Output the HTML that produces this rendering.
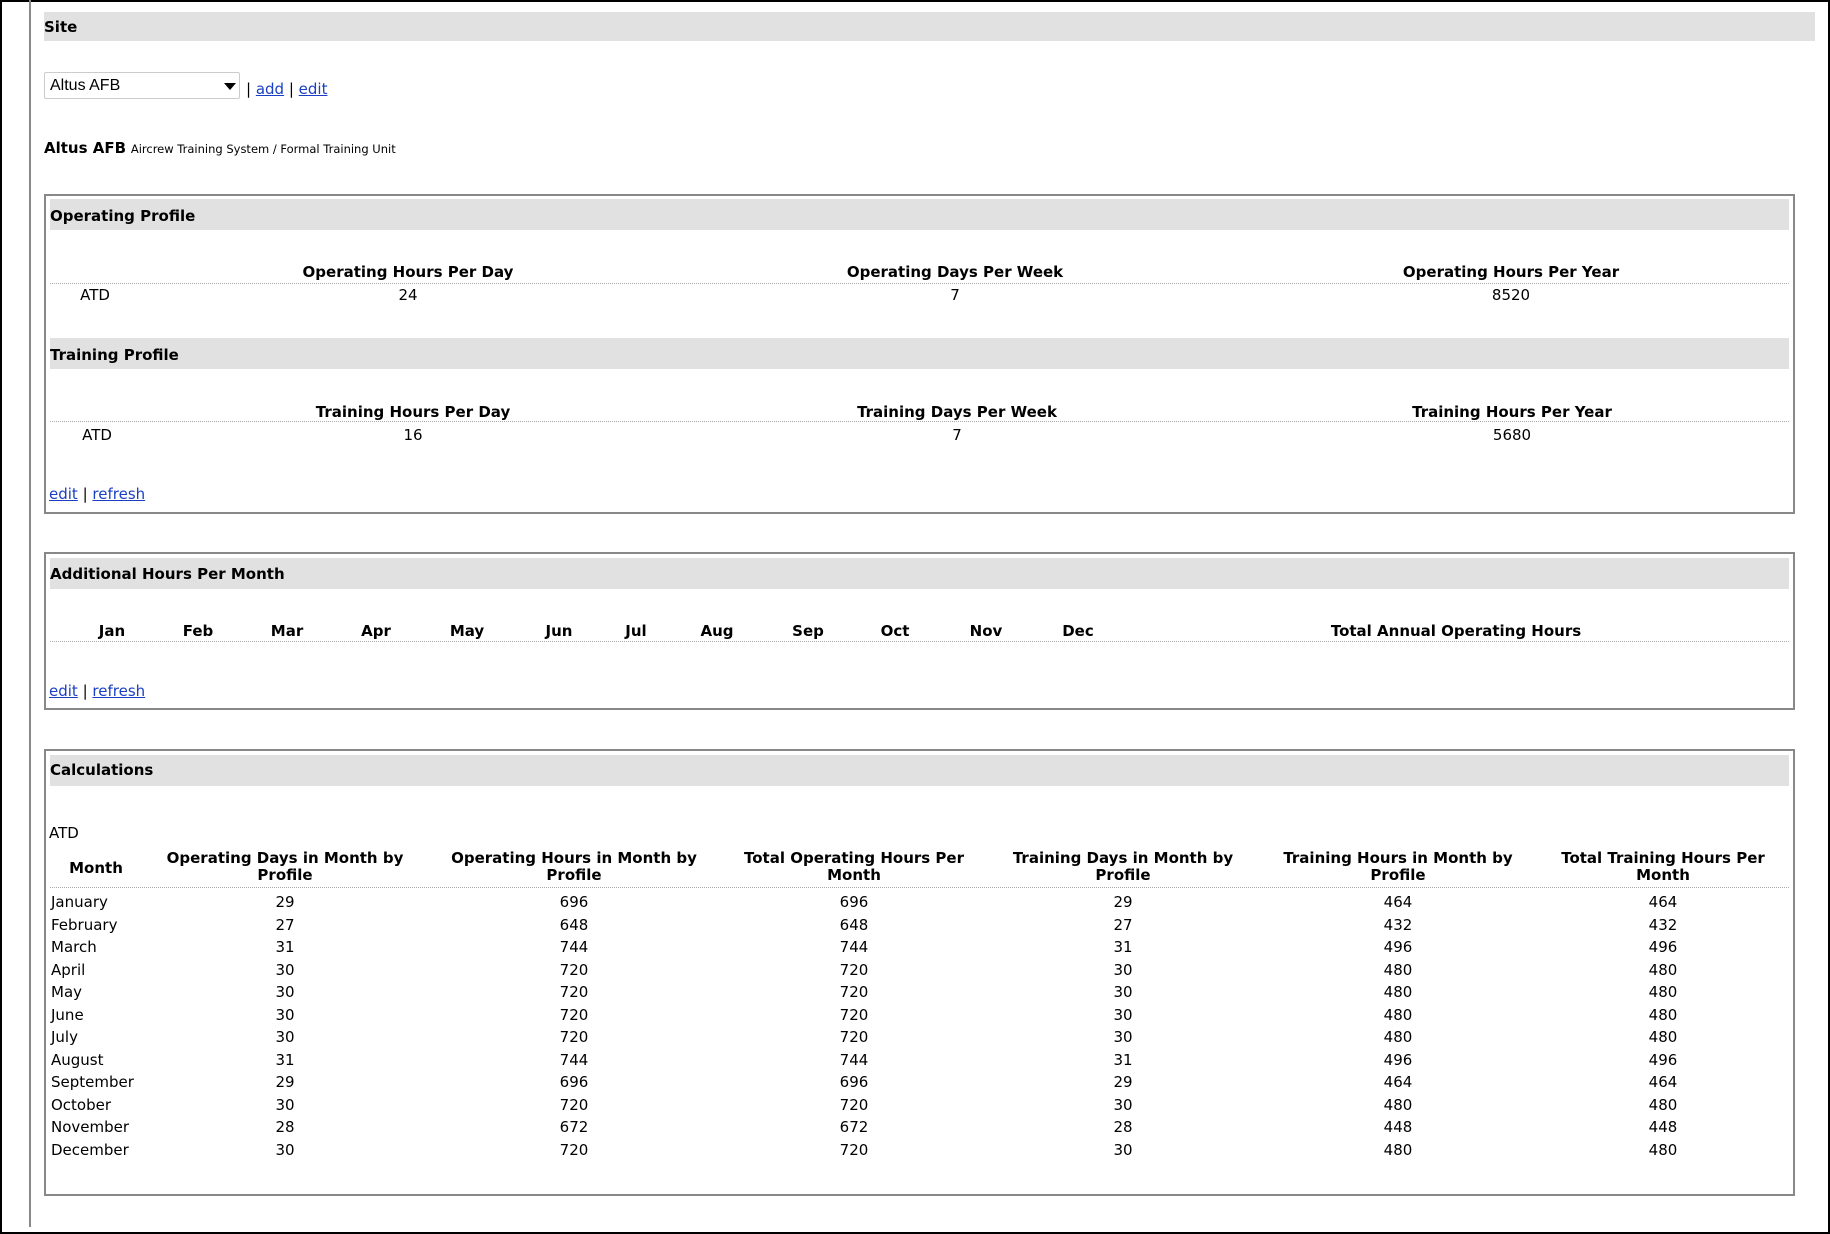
<!DOCTYPE html>
<html><head><meta charset="utf-8"><style>
*{margin:0;padding:0;box-sizing:border-box}
body{width:1830px;height:1234px;position:relative;background:#fff;font-family:"DejaVu Sans","Liberation Sans",sans-serif;font-size:15px;color:#000;overflow:hidden}
.frame{position:absolute;left:0;top:0;width:1830px;height:1234px;border:2px solid #000}
.vl{position:absolute;left:29px;top:0;width:2px;height:1227px;background:#888}
.a{position:absolute;white-space:nowrap;line-height:18px}
.c{position:absolute;white-space:nowrap;line-height:18px;transform:translateX(-50%);text-align:center}
.b{font-weight:bold}
.bar{position:absolute;background:#e1e1e1}
.box{position:absolute;border:2px solid #888}
.dot{position:absolute;height:0;border-top:1px dotted #aaa}
a{color:#1a3fc4;text-decoration:underline}
</style></head><body>
<div class="frame"></div>
<div class="vl"></div>

<div class="bar" style="left:44px;top:12px;width:1771px;height:29px"></div>
<div class="a b" style="left:44px;top:18px">Site</div>

<div style="position:absolute;left:44px;top:72px;width:196px;height:27px;border:1px solid #ccc;border-radius:2px;background:#fff"></div>
<div class="a" style="left:50px;top:77px;font-family:'Liberation Sans',sans-serif;font-size:16px">Altus AFB</div>
<div style="position:absolute;left:224px;top:83px;width:0;height:0;border-left:6px solid transparent;border-right:6px solid transparent;border-top:7px solid #000"></div>
<div class="a" style="left:246px;top:80px">| <a>add</a> | <a>edit</a></div>

<div class="a" style="left:44px;top:139px"><b>Altus AFB</b> <span style="font-size:11.5px">Aircrew Training System / Formal Training Unit</span></div>

<!-- Operating profile box -->
<div class="box" style="left:44px;top:194px;width:1751px;height:320px"></div>
<div class="bar" style="left:50px;top:199px;width:1739px;height:31px"></div>
<div class="a b" style="left:50px;top:207px">Operating Profile</div>
<div class="c b" style="left:408px;top:263px">Operating Hours Per Day</div>
<div class="c b" style="left:955px;top:263px">Operating Days Per Week</div>
<div class="c b" style="left:1511px;top:263px">Operating Hours Per Year</div>
<div class="dot" style="left:50px;top:283px;width:1739px"></div>
<div class="c" style="left:95px;top:286px">ATD</div>
<div class="c" style="left:408px;top:286px">24</div>
<div class="c" style="left:955px;top:286px">7</div>
<div class="c" style="left:1511px;top:286px">8520</div>

<div class="bar" style="left:50px;top:338px;width:1739px;height:31px"></div>
<div class="a b" style="left:50px;top:346px">Training Profile</div>
<div class="c b" style="left:413px;top:403px">Training Hours Per Day</div>
<div class="c b" style="left:957px;top:403px">Training Days Per Week</div>
<div class="c b" style="left:1512px;top:403px">Training Hours Per Year</div>
<div class="dot" style="left:50px;top:421px;width:1739px"></div>
<div class="c" style="left:97px;top:426px">ATD</div>
<div class="c" style="left:413px;top:426px">16</div>
<div class="c" style="left:957px;top:426px">7</div>
<div class="c" style="left:1512px;top:426px">5680</div>
<div class="a" style="left:49px;top:485px"><a>edit</a> | <a>refresh</a></div>

<!-- Additional hours -->
<div class="box" style="left:44px;top:552px;width:1751px;height:158px"></div>
<div class="bar" style="left:50px;top:558px;width:1739px;height:31px"></div>
<div class="a b" style="left:50px;top:565px">Additional Hours Per Month</div>
<div class="c b" style="left:112px;top:622px">Jan</div>
<div class="c b" style="left:198px;top:622px">Feb</div>
<div class="c b" style="left:287px;top:622px">Mar</div>
<div class="c b" style="left:376px;top:622px">Apr</div>
<div class="c b" style="left:467px;top:622px">May</div>
<div class="c b" style="left:559px;top:622px">Jun</div>
<div class="c b" style="left:636px;top:622px">Jul</div>
<div class="c b" style="left:717px;top:622px">Aug</div>
<div class="c b" style="left:808px;top:622px">Sep</div>
<div class="c b" style="left:895px;top:622px">Oct</div>
<div class="c b" style="left:986px;top:622px">Nov</div>
<div class="c b" style="left:1078px;top:622px">Dec</div>
<div class="c b" style="left:1456px;top:622px">Total Annual Operating Hours</div>
<div class="dot" style="left:50px;top:641px;width:1739px"></div>
<div class="a" style="left:49px;top:682px"><a>edit</a> | <a>refresh</a></div>

<!-- Calculations -->
<div class="box" style="left:44px;top:749px;width:1751px;height:447px"></div>
<div class="bar" style="left:50px;top:755px;width:1739px;height:31px"></div>
<div class="a b" style="left:50px;top:761px">Calculations</div>
<div class="a" style="left:49px;top:824px">ATD</div>
<div class="c b" style="left:96px;top:859px">Month</div>
<div class="c b" style="left:285px;top:850px;line-height:17px">Operating Days in Month by<br>Profile</div>
<div class="c b" style="left:574px;top:850px;line-height:17px">Operating Hours in Month by<br>Profile</div>
<div class="c b" style="left:854px;top:850px;line-height:17px">Total Operating Hours Per<br>Month</div>
<div class="c b" style="left:1123px;top:850px;line-height:17px">Training Days in Month by<br>Profile</div>
<div class="c b" style="left:1398px;top:850px;line-height:17px">Training Hours in Month by<br>Profile</div>
<div class="c b" style="left:1663px;top:850px;line-height:17px">Total Training Hours Per<br>Month</div>
<div class="dot" style="left:50px;top:887px;width:1739px"></div>

<div style="position:absolute;left:0;top:891px">
<table style="position:absolute;left:0;top:0;border-collapse:collapse">
</table>
</div>
<div id="rows"></div>
<div class="a" style="left:51px;top:891px;line-height:22.55px">January<br>February<br>March<br>April<br>May<br>June<br>July<br>August<br>September<br>October<br>November<br>December</div>
<div class="c" style="left:285px;top:891px;line-height:22.55px">29<br>27<br>31<br>30<br>30<br>30<br>30<br>31<br>29<br>30<br>28<br>30</div>
<div class="c" style="left:574px;top:891px;line-height:22.55px">696<br>648<br>744<br>720<br>720<br>720<br>720<br>744<br>696<br>720<br>672<br>720</div>
<div class="c" style="left:854px;top:891px;line-height:22.55px">696<br>648<br>744<br>720<br>720<br>720<br>720<br>744<br>696<br>720<br>672<br>720</div>
<div class="c" style="left:1123px;top:891px;line-height:22.55px">29<br>27<br>31<br>30<br>30<br>30<br>30<br>31<br>29<br>30<br>28<br>30</div>
<div class="c" style="left:1398px;top:891px;line-height:22.55px">464<br>432<br>496<br>480<br>480<br>480<br>480<br>496<br>464<br>480<br>448<br>480</div>
<div class="c" style="left:1663px;top:891px;line-height:22.55px">464<br>432<br>496<br>480<br>480<br>480<br>480<br>496<br>464<br>480<br>448<br>480</div>
</body></html>
